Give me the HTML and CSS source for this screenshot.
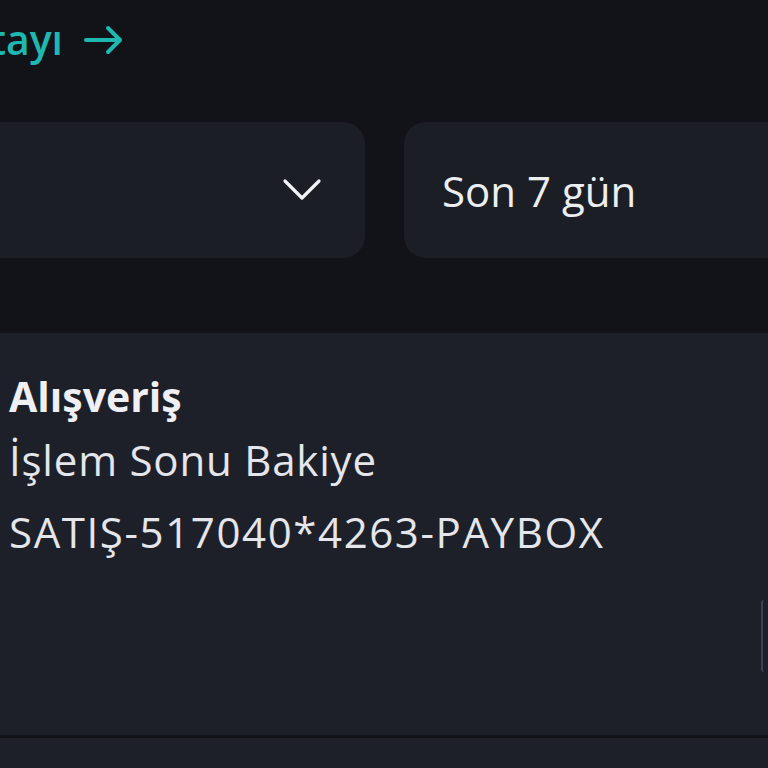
FILE: index.html
```html
<!DOCTYPE html>
<html lang="tr">
<head>
<meta charset="utf-8">
<link rel="stylesheet" href="styles.css">
</head>
<body>
<div class="page">
  <div class="top">
    <a class="detail-link"><span class="link-text">Detayı</span><svg class="arrow" width="40" height="30" viewBox="0 0 40 30"><path d="M2 15 H36 M24 3 L36 15 L24 27" fill="none" stroke="#1fb8b1" stroke-width="4" stroke-linecap="round" stroke-linejoin="round"/></svg></a>
  </div>
  <div class="filters">
    <div class="select select-left">
      <svg class="chev" width="40" height="26" viewBox="0 0 40 26"><path d="M3 4 L20 21 L37 4" fill="none" stroke="#f2f3f6" stroke-width="3.2" stroke-linecap="round" stroke-linejoin="round"/></svg>
    </div>
    <div class="select select-right">
      <span class="select-text">Son 7 gün</span>
    </div>
  </div>
  <div class="card">
    <div class="card-text">
      <div class="title">Alışveriş</div>
      <div class="line line-a">İşlem Sonu Bakiye</div>
      <div class="line line-b">SATIŞ-517040*4263-PAYBOX</div>
    </div>
    <div class="edge"></div>
  </div>
  <div class="divider"></div>
  <div class="card card-next"></div>
</div>
</body>
</html>
```
FILE: styles.css
```css
html, body {
  margin: 0;
  padding: 0;
  background: #121318;
  overflow: hidden;
}
.page {
  width: 768px;
  height: 768px;
  overflow: hidden;
  font-family: "Open Sans", "Noto Sans", sans-serif;
  color: #e8e9ee;
}
.top {
  height: 122px;
  display: flex;
  align-items: flex-start;
}
.detail-link {
  display: flex;
  align-items: center;
  margin-left: -64px;
  margin-top: 13px;
  font-size: 41px;
  font-weight: 600;
  color: #1fb8b1;
  line-height: 52px;
  white-space: nowrap;
}
.arrow {
  margin-left: 21px;
  margin-top: 2px;
}
.filters {
  display: flex;
  gap: 39px;
  margin-left: -120px;
}
.select {
  height: 136px;
  border-radius: 22px;
  background: #1c1e26;
  display: flex;
  align-items: center;
  flex: 0 0 auto;
}
.select-left {
  width: 485px;
  justify-content: flex-end;
}
.chev {
  margin-right: 43px;
}
.select-right {
  width: 480px;
}
.select-text {
  margin-left: 38px;
  font-size: 42px;
  color: #eceef2;
}
.card {
  margin-top: 75px;
  height: 402px;
  background: #1d2029;
  display: flex;
  justify-content: space-between;
}
.card-text {
  padding-left: 9px;
  padding-top: 35px;
}
.title {
  font-size: 41px;
  font-weight: 700;
  line-height: 56px;
  color: #eff0f4;
}
.line {
  font-size: 42px;
  line-height: 72px;
  color: #e4e6eb;
}
.line-a {
  letter-spacing: 0.8px;
}
.line-b {
  letter-spacing: 1.6px;
}
.edge {
  width: 5px;
  height: 72px;
  margin-top: 267px;
  border-left: 2px solid #3c4252;
  border-radius: 3px 0 0 3px;
}
.divider {
  height: 3px;
  background: #121319;
}
.card-next {
  margin-top: 0;
  height: 40px;
}
```
